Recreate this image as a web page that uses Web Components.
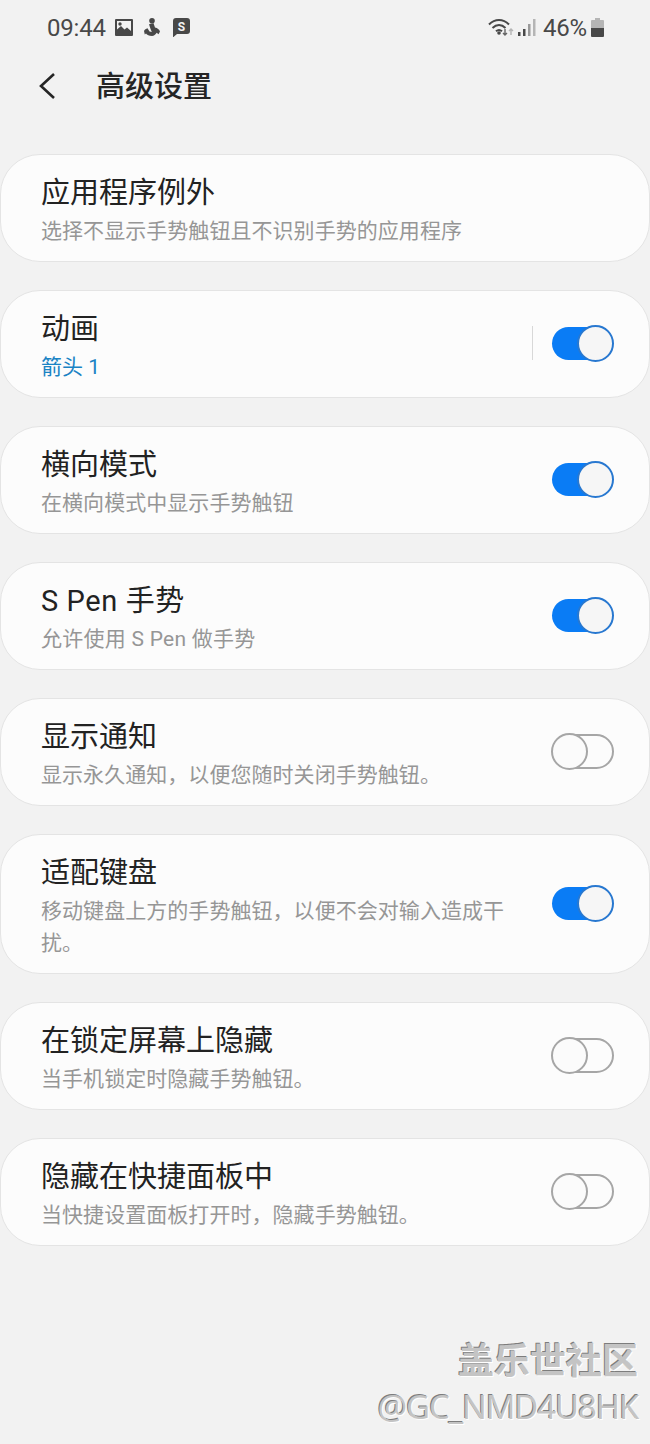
<!DOCTYPE html>
<html lang="zh"><head><meta charset="utf-8"><title>高级设置</title>
<style>
html,body{margin:0;padding:0;background:#f2f2f2;}
body{width:650px;height:1444px;overflow:hidden;font-family:Roboto,"Noto Sans CJK SC",sans-serif;position:relative;}
settings-list{margin-top:35.500px}
</style></head><body>
<status-bar></status-bar>
<app-header>高级设置</app-header>
<settings-list>
<setting-row title="应用程序例外" sub="选择不显示手势触钮且不识别手势的应用程序"></setting-row>
<setting-row title="动画" sub="箭头 1" accent divider on></setting-row>
<setting-row title="横向模式" sub="在横向模式中显示手势触钮" on></setting-row>
<setting-row title="S Pen 手势" sub="允许使用 S Pen 做手势" on style="--tls:.6px;--sls:.25px"></setting-row>
<setting-row title="显示通知" sub="显示永久通知，以便您随时关闭手势触钮。" off></setting-row>
<setting-row title="适配键盘" sub="移动键盘上方的手势触钮，以便不会对输入造成干扰。" on></setting-row>
<setting-row title="在锁定屏幕上隐藏" sub="当手机锁定时隐藏手势触钮。" off></setting-row>
<setting-row title="隐藏在快捷面板中" sub="当快捷设置面板打开时，隐藏手势触钮。" off></setting-row>
</settings-list>
<water-mark></water-mark>
<script>
function def(name,html,init){customElements.define(name,class extends HTMLElement{connectedCallback(){if(this.shadowRoot)return;const r=this.attachShadow({mode:'open'});r.innerHTML=html;if(init)init.call(this,r);}});}
def('status-bar',`<style>
:host{display:flex;align-items:center;height:54px;padding:1px 46px 0 47px;box-sizing:border-box;color:#484848;font:24px/54px Roboto,sans-serif}
.t{width:58px;letter-spacing:-.2px}
svg{display:block;flex:none;margin-top:-1px}
.sp{flex:1}
.pct{letter-spacing:-.2px}
</style>
<span class="t">09:44</span>
<svg style="margin-left:10px" width="18" height="17" viewBox="0 0 18 17"><path fill="#484848" fill-rule="evenodd" d="M1 0h16a1 1 0 0 1 1 1v15a1 1 0 0 1-1 1H1a1 1 0 0 1-1-1V1a1 1 0 0 1 1-1zm1 2v8.500l4-3.500 3.500 3.500 2.500-2 4 3.500V2z"/><circle cx="5" cy="5" r="1.700" fill="#484848"/></svg>
<svg style="margin-left:11px" width="16" height="18" viewBox="0 0 16 18"><circle cx="8" cy="2.800" r="2.800" fill="#484848"/><path fill="#484848" d="M5 6.200 9.500 5.300 11 9.500C13.500 10 15.200 11.500 16 13.500L14.500 16.200 12.700 14.800C11.500 16.800 10 18 8 18 5 18 3 16.800 2 15.500L.8 16.500 0 13C.7 11.800 2 10.800 3.500 10.300L5.500 13.500 7.800 14C6.800 11.500 5.700 9 5 6.200Z"/></svg>
<svg style="margin-left:13px" width="17" height="19" viewBox="0 0 17 19"><path fill="#484848" d="M3 0h11a3 3 0 0 1 3 3v10a3 3 0 0 1-3 3H4l-3.500 3H0V3a3 3 0 0 1 3-3z"/><text x="8.500" y="12.500" text-anchor="middle" font-family="Roboto" font-weight="700" font-size="12" fill="#f2f2f2">S</text></svg>
<span class="sp"></span>
<svg width="26" height="20" viewBox="0 0 26 20" fill="none"><path d="M1 7.500C7 1.500 15 1.500 21 7.500" stroke="#484848" stroke-width="2"/><path d="M4.500 11C8.500 7 13.500 7 17.500 11" stroke="#484848" stroke-width="2"/><path d="M8 14.300C10 12.500 12 12.500 14 14.300" stroke="#484848" stroke-width="2"/><circle cx="11" cy="16" r="1.800" fill="#484848"/><path d="M17 12v6M15 16l2 2 2-2" stroke="#666" stroke-width="1.400"/><path d="M23 18v-6M21 14l2-2 2 2" stroke="#b5b5b5" stroke-width="1.400"/></svg>
<svg style="margin-left:4px" width="18" height="18" viewBox="0 0 18 18"><rect x="0" y="14" width="2.500" height="4" fill="#484848"/><rect x="5" y="11" width="2.500" height="7" fill="#484848"/><rect x="10" y="6" width="2.500" height="12" fill="#9a9a9a"/><rect x="15" y="1" width="2.500" height="17" fill="#b5b5b5"/></svg>
<span class="pct" style="margin-left:7px">46%</span>
<svg style="margin-left:4px" width="13" height="19" viewBox="0 0 13 19"><path fill="#b5b5b5" d="M4 0h5v2h3a1 1 0 0 1 1 1v7H0V3a1 1 0 0 1 1-1h3z"/><path fill="#484848" d="M0 10h13v8a1 1 0 0 1-1 1H1a1 1 0 0 1-1-1z"/></svg>`);
def('app-header',`<style>
:host{display:flex;align-items:center;height:64px;color:#252525;font:500 29px/60px "Noto Sans CJK SC",sans-serif}
svg{margin-left:38px;margin-right:39px;flex:none}
span{margin-top:-4px}
</style><svg width="19" height="28" viewBox="0 0 19 28" fill="none"><path d="M16 2 3 14l13 12" stroke="#252525" stroke-width="2.600"/></svg><span><slot></slot></span>`);
def('settings-list',`<style>:host{display:flex;flex-direction:column;gap:28px}</style><slot></slot>`);
def('toggle-sw',`<style>
:host{display:block;position:relative;width:63px;height:37px;flex:none}
.track{position:absolute;left:1px;top:2px;width:59px;height:33px;box-sizing:border-box;border-radius:17px;background:#0a7cf5}
.knob{position:absolute;right:0;top:0;width:37px;height:37px;box-sizing:border-box;border-radius:50%;background:#f6f6f6;border:2px solid #2878d0}
:host([off]) .track{left:auto;right:0;top:1px;width:60px;height:35px;background:#fcfcfc;border:2.500px solid #a6a6a6;border-radius:18px}
:host([off]) .knob{right:auto;left:0;background:#fbfbfb;border:2.500px solid #a6a6a6}
</style><div class="track"></div><div class="knob"></div>`);
def('setting-row',`<style>
:host{display:flex;align-items:center;box-sizing:border-box;min-height:108px;padding:18px 35px 14px 40px;background:#fcfcfc;border:1px solid #e4e4e4;border-radius:40px;}
.txt{flex:1;min-width:0}
.title{font-size:29px;line-height:40px;color:#222;letter-spacing:var(--tls,0)}
.sub{font-size:21px;line-height:32px;color:#969696;margin-top:2px;letter-spacing:var(--sls,.05px)}
:host([accent]) .sub{color:#1a83c4}
.div{width:1px;height:34px;background:#d8d8d8;margin-right:18px;margin-bottom:5px;flex:none}
toggle-sw{margin-left:39px;margin-bottom:5px}
:host([divider]) toggle-sw{margin-left:0}
</style><div class="txt"><div class="title"></div><div class="sub"></div></div><span class="div"></span><toggle-sw></toggle-sw>`,function(r){
r.querySelector('.title').textContent=this.getAttribute('title');
r.querySelector('.sub').textContent=this.getAttribute('sub');
const t=r.querySelector('toggle-sw'),d=r.querySelector('.div');
if(this.hasAttribute('on')||this.hasAttribute('off')){if(this.hasAttribute('off'))t.setAttribute('off','');}
else t.style.display='none';
if(!this.hasAttribute('divider'))d.style.display='none';
});
def('water-mark',`<style>
:host{position:absolute;right:12px;top:1333px;text-align:right;color:#c4c4c4;text-shadow:1px 1px 0 #fff,-1px -1px 0 #7d7d7d}
.a{font:700 36px/50px "Noto Sans CJK SC",sans-serif}
.b{font:33px/44px "Open Sans",sans-serif;margin-top:2px;letter-spacing:-1.1px;}
</style><div class="a">盖乐世社区</div><div class="b">@GC_NMD4U8HK</div>`);
</script>
</body></html>
